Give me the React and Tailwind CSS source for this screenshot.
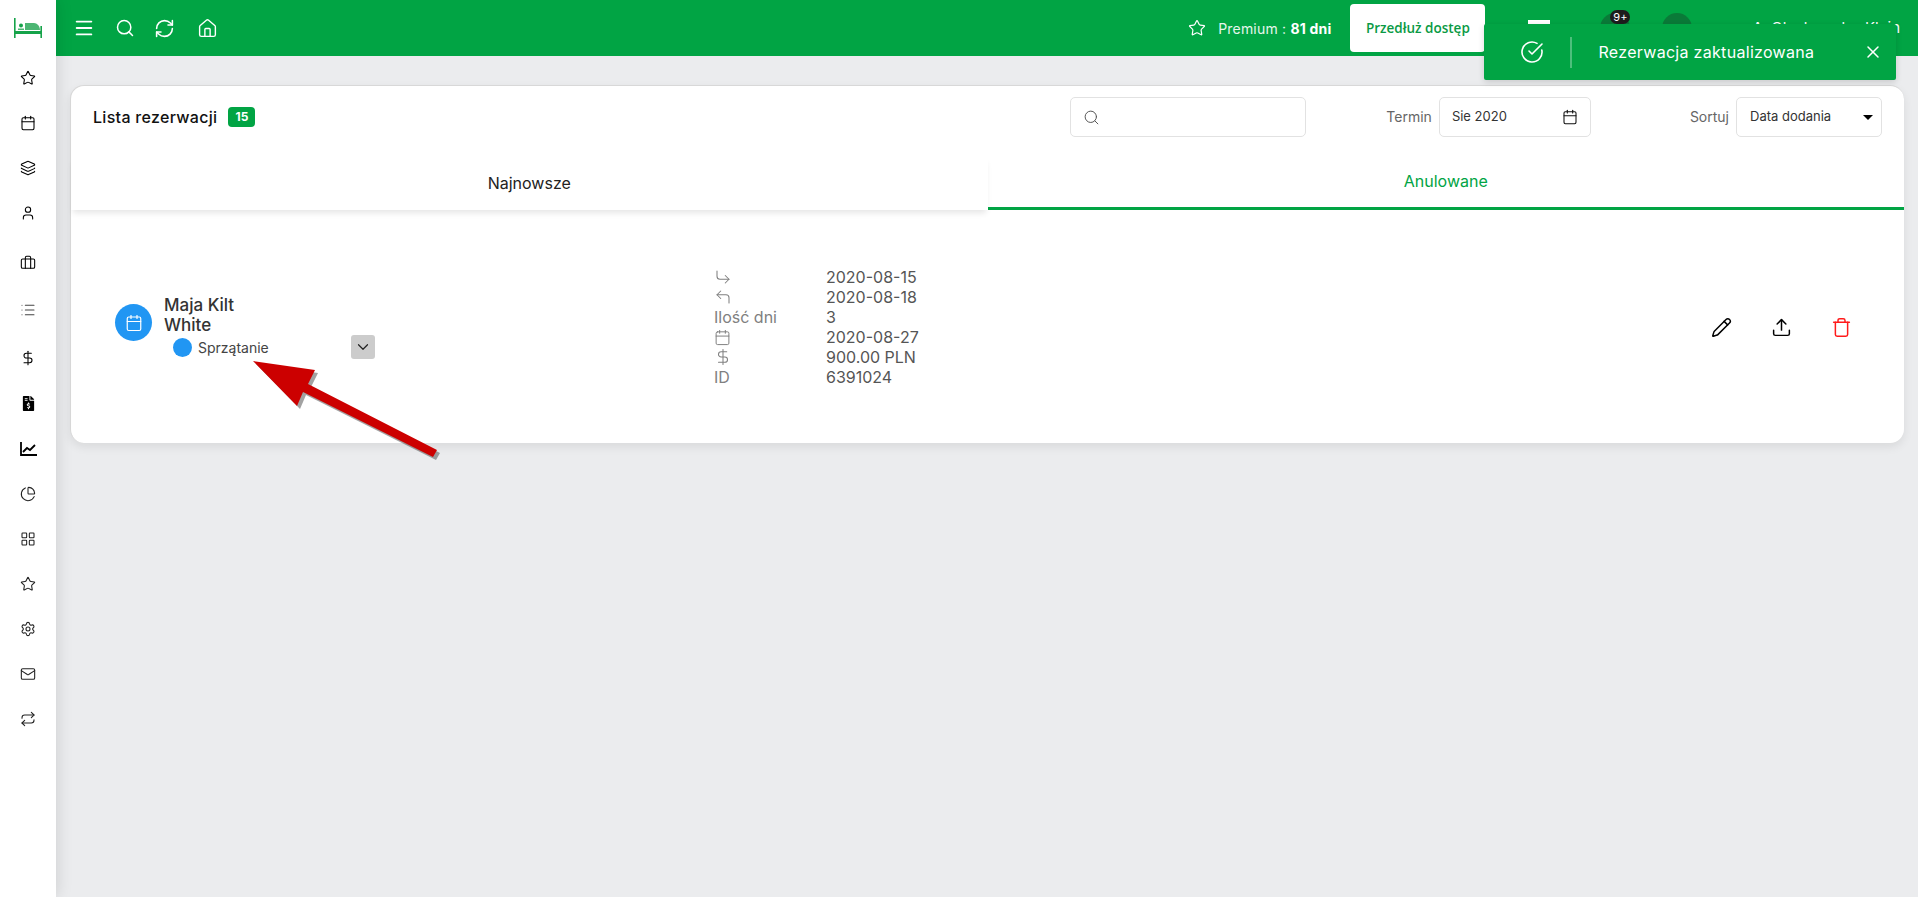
import React from 'react';
import {
  Menu, Search, RefreshCw, House, Star, Calendar, Layers, User, Briefcase, List, DollarSign,
  PieChart, LayoutGrid, Settings, Mail, Repeat, CircleCheckBig, X, ChevronDown, CornerDownRight,
  CornerUpLeft, Pencil, Upload, Trash,
} from 'lucide-react';
import { FaFileInvoiceDollar } from 'react-icons/fa';

const ChartIcon = () => (
  <svg width="17" height="14" viewBox="0 0 17 14" fill="none" stroke="#000" strokeWidth="1.8">
    <path d="M1 0v13h16" />
    <path d="M3 10l4-4 3 2 5-5" />
  </svg>
);

const BedLogo = () => (
  <svg width="28" height="20" viewBox="0 0 28 20" fill="#16a34a">
    <rect x="0" y="0" width="1.6" height="20" />
    <rect x="26.4" y="8" width="1.6" height="12" />
    <rect x="0" y="13" width="28" height="3" />
    <circle cx="7" cy="7.5" r="2" />
    <path d="M4 12v-1.5h6V12zM11 12V5h9c3 0 6 3 6 7z" fill="#4cb673" />
  </svg>
);

const sideItems = [
  [Star, 'h-[45px]'],
  [Calendar, 'h-[45px]'],
  [Layers, 'h-[45px]'],
  [User, 'h-[45px]'],
  [Briefcase, 'h-[50px] pt-[5px]'],
  [List, 'h-[50px] text-[#444]'],
  [DollarSign, 'h-[46px]'],
];

const sideItemsBottom = [PieChart, LayoutGrid, Star, Settings, Mail, Repeat];

const rows = [
  [<CornerDownRight key="a" size={18} strokeWidth={1.4} />, '2020-08-15'],
  [<CornerUpLeft key="b" size={18} strokeWidth={1.4} />, '2020-08-18'],
  ['Ilość dni', '3'],
  [<Calendar key="c" size={17} strokeWidth={1.4} />, '2020-08-27'],
  [<DollarSign key="d" size={18} strokeWidth={1.4} />, '900.00 PLN'],
  ['ID', '6391024'],
];

const Sidebar = () => (
  <aside className="relative z-10 w-14 shrink-0 bg-white flex flex-col items-center shadow-[0_0_16px_rgba(0,0,0,0.14)]">
    <div className="h-[55px] flex items-center justify-center"><BedLogo /></div>
    {sideItems.map(([Icon, cls], i) => (
      <div key={i} className={`${cls} w-full flex items-center justify-center`}>
        <Icon size={16} strokeWidth={1.6} />
      </div>
    ))}
    <div className="h-[45px] w-full flex items-center justify-center"><FaFileInvoiceDollar size={15} color="#000" /></div>
    <div className="h-[45px] w-full flex items-center justify-center"><ChartIcon /></div>
    {sideItemsBottom.map((Icon, i) => (
      <div key={i} className="h-[45px] w-full flex items-center justify-center text-[#222]">
        <Icon size={16} strokeWidth={1.6} />
      </div>
    ))}
  </aside>
);

const Header = () => (
  <header className="relative h-14 shrink-0 bg-[#01a444] flex items-center pl-[17px] text-white">
    <Menu size={22} strokeWidth={2} />
    <Search size={20} strokeWidth={1.8} className="ml-[20px]" />
    <RefreshCw size={21} strokeWidth={1.8} className="ml-[19px]" />
    <House size={21} strokeWidth={1.6} className="ml-[22px]" />
    <div className="ml-auto flex items-center h-full">
      <Star size={18} strokeWidth={1.6} />
      <span className="ml-[12px] text-[14px] tracking-[0.2px] text-[#e6f6ec]">
        Premium : <b className="font-bold text-white">81 dni</b>
      </span>
      <button className="ml-[19px] w-[135px] h-[48px] bg-white rounded-[4px] text-[#0a9a44] text-[13.5px] font-semibold font-['Open_Sans',sans-serif]">
        Przedłuż dostęp
      </button>
      <div className="ml-[43px] w-[22px] self-start mt-[20px]">
        <div className="h-[4px] bg-white" />
      </div>
      <div className="relative ml-[50px] w-[30px] h-[30px] rounded-full bg-[#0a7a38]">
        <span className="absolute -top-[3px] left-[10px] w-[20px] h-[14px] rounded-full bg-[#1d1d1d] text-[11px] leading-[14px] text-center text-white">9+</span>
      </div>
      <div className="ml-[32px] w-[30px] h-[30px] rounded-full bg-[#0a7a38]" />
      <span className="ml-[60px] mr-[18px] text-[15px] whitespace-nowrap">A. Olechowska-Klein</span>
    </div>
    <div className="absolute z-20 left-[1428px] top-[24px] w-[412px] h-[56px] bg-[#01a444] rounded-[2px] shadow-[0_2px_6px_rgba(0,0,0,0.15)] flex items-center">
      <CircleCheckBig size={24} strokeWidth={1.6} className="ml-[36px]" />
      <div className="ml-[26px] w-[1.5px] h-[31px] bg-[#4dbf7c]" />
      <span className="ml-[27px] text-[16px] tracking-[0.3px]">Rezerwacja zaktualizowana</span>
      <X size={20} strokeWidth={1.8} className="ml-auto mr-[13px]" />
    </div>
  </header>
);

const CardHeader = () => (
  <div className="h-[70px] pt-[11px] flex items-start text-[14px]">
    <div className="h-10 pl-[22px] flex items-center">
      <h1 className="text-[16px] font-medium text-[#111] tracking-[0.3px]">Lista rezerwacji</h1>
      <span className="ml-[11px] w-[27px] h-5 rounded-[4px] bg-[#01a444] text-white text-[12px] font-bold leading-5 text-center">15</span>
    </div>
    <div className="ml-[815px] w-[236px] h-10 border border-[#e2e2e2] rounded-[5px] flex items-center pl-[12px]">
      <Search size={17} strokeWidth={1.4} className="text-[#555]" />
    </div>
    <span className="ml-auto h-10 leading-10 text-[#666]">Termin</span>
    <div className="ml-[7px] w-[152px] h-10 border border-[#e2e2e2] rounded-[5px] flex items-center justify-between pl-[12px] pr-[12px] text-[#333] text-[13px]">
      Sie 2020
      <Calendar size={16} strokeWidth={1.6} className="text-[#111]" />
    </div>
    <span className="ml-[99px] h-10 leading-10 text-[#666]">Sortuj</span>
    <div className="ml-[7px] mr-[22px] w-[146px] h-10 border border-[#e2e2e2] rounded-[5px] flex items-center justify-between pl-[13px] pr-[8px] text-[#333] text-[13px]">
      Data dodania
      <span className="w-0 h-0 border-x-[5px] border-x-transparent border-t-[5px] border-t-black" />
    </div>
  </div>
);

const Tabs = () => (
  <div className="grid grid-cols-2 h-[54px] text-[16px]">
    <div className="flex items-center justify-center text-[#222] pb-[-1px] shadow-[0_5px_6px_-2px_rgba(0,0,0,0.1)]">Najnowsze</div>
    <div className="flex items-center justify-center text-[#01a444] border-b-[3px] border-[#01a444] pb-[2px]">Anulowane</div>
  </div>
);

const ReservationRow = () => (
  <div className="h-[234px] flex items-center">
    <div className="w-[643px] shrink-0 pl-[44px] flex items-start">
      <div className="w-[37px] h-[37px] mt-[9px] rounded-full bg-[#2196f3] flex items-center justify-center text-white">
        <Calendar size={18} strokeWidth={1.6} />
      </div>
      <div className="ml-[12px] w-[211px]">
        <div className="w-[110px] text-[17px] leading-5 font-medium text-[#333]">Maja Kilt White</div>
        <div className="h-6 pl-[9px] flex items-center">
          <span className="w-[19px] h-[19px] rounded-full bg-[#2196f3]" />
          <span className="ml-[6px] text-[14px] text-[#444]">Sprzątanie</span>
          <button className="ml-auto w-6 h-6 rounded-[3px] bg-[#cccccc] flex items-center justify-center text-[#222]">
            <ChevronDown size={18} strokeWidth={1.6} />
          </button>
        </div>
      </div>
    </div>
    <div className="grid grid-cols-[112px_auto] text-[16px] leading-5">
      {rows.map(([label, value], i) => (
        <React.Fragment key={i}>
          <div className="h-5 flex items-center text-[#808080]">{label}</div>
          <div className="text-[#555]">{value}</div>
        </React.Fragment>
      ))}
    </div>
    <div className="ml-auto mr-[52px] flex gap-[39px]">
      <Pencil size={21} strokeWidth={1.7} className="text-black" />
      <Upload size={21} strokeWidth={1.7} className="text-black" />
      <Trash size={21} strokeWidth={1.7} className="text-[#ff1a1a]" />
    </div>
  </div>
);

// red annotation arrow drawn over the card
const Arrow = () => (
  <svg className="absolute left-[240px] top-[350px] z-30" width="210" height="120" viewBox="240 350 210 120">
    <polygon points="253,361 315,370 308,384 437,450 433,457 303,392 297,406" fill="#555" opacity="0.55" transform="translate(3,3)" />
    <polygon points="253,361 315,370 308,384 437,450 433,457 303,392 297,406" fill="#cc0000" />
  </svg>
);

export default function App() {
  return (
    <div className="relative h-[897px] flex overflow-hidden bg-[#ebecee] font-[Inter,sans-serif]">
      <Sidebar />
      <div className="flex-1 min-w-0 flex flex-col">
        <Header />
        <main className="pt-[29px] px-[14px]">
          <section className="h-[358px] bg-white rounded-[14px] border-t border-l border-[#d8d8d8] shadow-[0_4px_10px_rgba(0,0,0,0.08)]">
            <CardHeader />
            <Tabs />
            <ReservationRow />
          </section>
        </main>
      </div>
      <Arrow />
    </div>
  );
}
